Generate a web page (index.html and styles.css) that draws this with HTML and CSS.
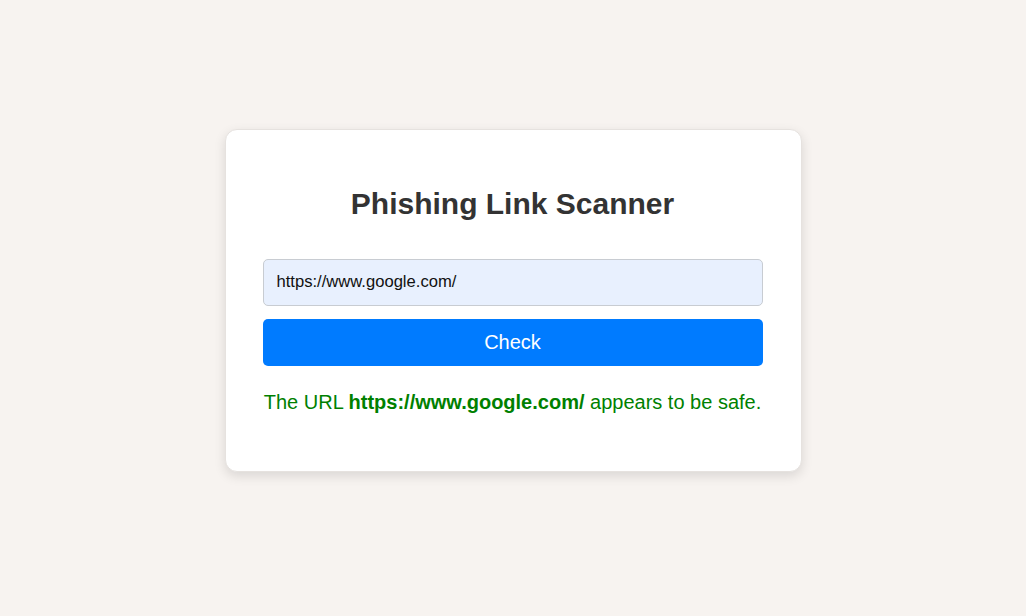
FILE: index.html
```html
<!DOCTYPE html>
<html>
<head>
<meta charset="utf-8">
<link rel="stylesheet" href="styles.css">
</head>
<body>
<main class="page">
  <section class="card">
    <h1 class="title">Phishing Link Scanner</h1>
    <form class="form">
      <input class="url-input" type="text" value="https://www.google.com/">
      <button class="check-btn" type="button">Check</button>
    </form>
    <p class="result">The URL <strong>https://www.google.com/</strong> appears to be safe.</p>
  </section>
</main>
</body>
</html>
```
FILE: styles.css
```css
html, body {
  margin: 0;
  padding: 0;
}
body {
  background: #f7f3f0;
  font-family: "Liberation Sans", Arial, sans-serif;
}
.page {
  min-height: 616px;
  box-sizing: border-box;
  padding-bottom: 16px;
  display: flex;
  align-items: center;
  justify-content: center;
}
.card {
  width: 500px;
  padding: 38px 38px 45px 37px;
  background: #fff;
  border-radius: 12px;
  box-shadow: 0 4px 12px rgba(0, 0, 0, 0.12);
  border: 1px solid #e6e2df;
  text-align: center;
}
.title {
  margin: 19px 0 38px;
  font-size: 30px;
  font-weight: bold;
  color: #333;
  line-height: 34px;
}
.form {
  display: flex;
  flex-direction: column;
  gap: 13px;
}
.url-input {
  box-sizing: border-box;
  width: 100%;
  height: 47px;
  padding: 0 13px;
  font-family: "Liberation Sans", Arial, sans-serif;
  font-size: 16.6px;
  color: #111;
  background: #e8f0fe;
  border: 1px solid #c8ccd2;
  border-radius: 5px;
}
.check-btn {
  height: 47px;
  width: 100%;
  border: none;
  border-radius: 5px;
  background: #007bff;
  color: #fff;
  font-family: "Liberation Sans", Arial, sans-serif;
  font-size: 20px;
}
.result {
  margin: 24px 0 12px;
  font-size: 20px;
  line-height: 24px;
  color: #008000;
}
.result strong {
  font-weight: bold;
}
```
